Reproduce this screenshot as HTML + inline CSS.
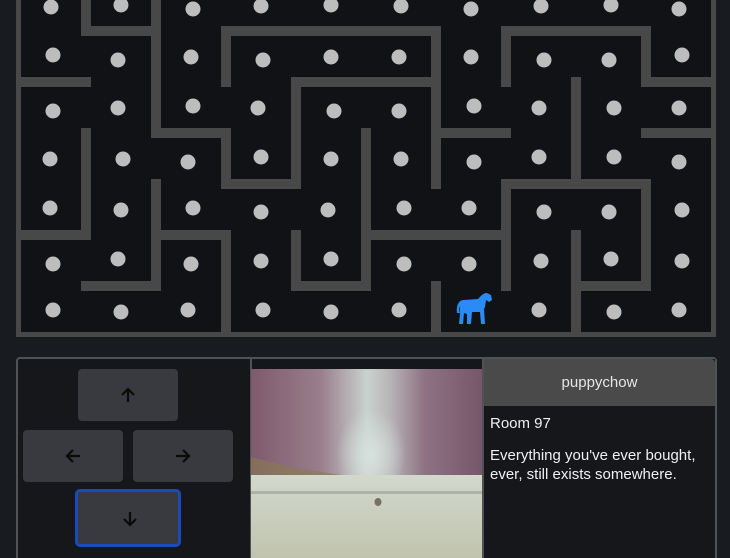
<!DOCTYPE html>
<html><head><meta charset="utf-8"><style>
html,body{margin:0;padding:0;background:#181b1f;width:730px;height:558px;overflow:hidden;font-family:"Liberation Sans",sans-serif;position:relative}
#maze{position:absolute;left:0;top:0}
.panel{position:absolute;left:16px;top:357px;width:698px;height:210px;border:2px solid #505256;border-radius:4px;background:#15171b;box-sizing:border-box;width:701px}
.btn{position:absolute;width:100px;height:52px;background:#383a3f;border-radius:4px}
.btn svg{position:absolute;left:41px;top:17px}
.info{position:absolute;left:484px;top:359px;width:231px;height:210px;background:#15171b}
.hdr{height:47px;background:#4a4a4a;color:#e6e6e6;font-family:"Liberation Sans",sans-serif;font-size:15px;text-align:center;line-height:48px;border-radius:0 4px 0 0}
.body{color:#f0f0f0;font-family:"Liberation Sans",sans-serif;font-size:15px;padding:8px 6px;line-height:19px}
</style></head><body>
<svg id="maze" width="730" height="340" viewBox="0 0 730 340">
<defs><clipPath id="c"><rect x="16" y="0" width="700" height="337"/></clipPath></defs>
<rect x="16" y="0" width="700" height="337" fill="#111216"/>
<g stroke="#484848" stroke-width="10" stroke-linecap="square" fill="none" clip-path="url(#c)">
<line x1="86" y1="-20" x2="86" y2="31"/><line x1="86" y1="133" x2="86" y2="235"/>
<line x1="156" y1="-20" x2="156" y2="133"/><line x1="156" y1="184" x2="156" y2="286"/>
<line x1="226" y1="31" x2="226" y2="82"/><line x1="226" y1="133" x2="226" y2="184"/><line x1="226" y1="235" x2="226" y2="337"/>
<line x1="296" y1="82" x2="296" y2="184"/><line x1="296" y1="235" x2="296" y2="286"/>
<line x1="366" y1="133" x2="366" y2="286"/>
<line x1="436" y1="31" x2="436" y2="184"/><line x1="436" y1="286" x2="436" y2="337"/>
<line x1="506" y1="31" x2="506" y2="82"/><line x1="506" y1="184" x2="506" y2="286"/>
<line x1="576" y1="82" x2="576" y2="184"/><line x1="576" y1="235" x2="576" y2="337"/>
<line x1="646" y1="31" x2="646" y2="82"/><line x1="646" y1="184" x2="646" y2="286"/>
<line x1="86" y1="31" x2="156" y2="31"/><line x1="226" y1="31" x2="436" y2="31"/><line x1="506" y1="31" x2="646" y2="31"/>
<line x1="16" y1="82" x2="86" y2="82"/><line x1="296" y1="82" x2="436" y2="82"/><line x1="646" y1="82" x2="716" y2="82"/>
<line x1="156" y1="133" x2="226" y2="133"/><line x1="436" y1="133" x2="506" y2="133"/><line x1="646" y1="133" x2="716" y2="133"/>
<line x1="226" y1="184" x2="296" y2="184"/><line x1="506" y1="184" x2="646" y2="184"/>
<line x1="16" y1="235" x2="86" y2="235"/><line x1="156" y1="235" x2="226" y2="235"/><line x1="366" y1="235" x2="506" y2="235"/>
<line x1="86" y1="286" x2="156" y2="286"/><line x1="296" y1="286" x2="366" y2="286"/><line x1="576" y1="286" x2="646" y2="286"/>
</g>
<rect x="16" y="0" width="5" height="337" fill="#484848"/>
<rect x="711" y="0" width="5" height="337" fill="#484848"/>
<rect x="16" y="332" width="700" height="5" fill="#484848"/>
<g fill="#bdbdbd">
<circle cx="51" cy="7" r="7.5"/><circle cx="121" cy="5" r="7.5"/><circle cx="193" cy="9" r="7.5"/><circle cx="261" cy="6" r="7.5"/><circle cx="331" cy="5" r="7.5"/><circle cx="401" cy="6" r="7.5"/><circle cx="471" cy="9" r="7.5"/><circle cx="541" cy="6" r="7.5"/><circle cx="611" cy="5" r="7.5"/><circle cx="679" cy="9" r="7.5"/>
<circle cx="53" cy="55" r="7.5"/><circle cx="118" cy="60" r="7.5"/><circle cx="191" cy="57" r="7.5"/><circle cx="263" cy="60" r="7.5"/><circle cx="331" cy="57" r="7.5"/><circle cx="399" cy="57" r="7.5"/><circle cx="471" cy="57" r="7.5"/><circle cx="544" cy="60" r="7.5"/><circle cx="609" cy="60" r="7.5"/><circle cx="682" cy="55" r="7.5"/>
<circle cx="53" cy="111" r="7.5"/><circle cx="118" cy="108" r="7.5"/><circle cx="193" cy="106" r="7.5"/><circle cx="258" cy="108" r="7.5"/><circle cx="334" cy="111" r="7.5"/><circle cx="399" cy="111" r="7.5"/><circle cx="474" cy="106" r="7.5"/><circle cx="539" cy="108" r="7.5"/><circle cx="614" cy="108" r="7.5"/><circle cx="679" cy="108" r="7.5"/>
<circle cx="50" cy="159" r="7.5"/><circle cx="123" cy="159" r="7.5"/><circle cx="188" cy="162" r="7.5"/><circle cx="261" cy="157" r="7.5"/><circle cx="331" cy="159" r="7.5"/><circle cx="401" cy="159" r="7.5"/><circle cx="474" cy="162" r="7.5"/><circle cx="539" cy="157" r="7.5"/><circle cx="614" cy="157" r="7.5"/><circle cx="679" cy="162" r="7.5"/>
<circle cx="50" cy="208" r="7.5"/><circle cx="121" cy="210" r="7.5"/><circle cx="193" cy="208" r="7.5"/><circle cx="261" cy="212" r="7.5"/><circle cx="328" cy="210" r="7.5"/><circle cx="404" cy="208" r="7.5"/><circle cx="469" cy="208" r="7.5"/><circle cx="544" cy="212" r="7.5"/><circle cx="609" cy="212" r="7.5"/><circle cx="682" cy="210" r="7.5"/>
<circle cx="53" cy="264" r="7.5"/><circle cx="118" cy="259" r="7.5"/><circle cx="191" cy="264" r="7.5"/><circle cx="261" cy="261" r="7.5"/><circle cx="331" cy="259" r="7.5"/><circle cx="404" cy="264" r="7.5"/><circle cx="469" cy="264" r="7.5"/><circle cx="541" cy="261" r="7.5"/><circle cx="611" cy="259" r="7.5"/><circle cx="682" cy="261" r="7.5"/>
<circle cx="53" cy="310" r="7.5"/><circle cx="121" cy="312" r="7.5"/><circle cx="188" cy="310" r="7.5"/><circle cx="263" cy="310" r="7.5"/><circle cx="331" cy="312" r="7.5"/><circle cx="399" cy="310" r="7.5"/><circle cx="539" cy="310" r="7.5"/><circle cx="614" cy="312" r="7.5"/><circle cx="679" cy="310" r="7.5"/>
</g>
<path fill="#2a8af6" d="M457 313 C456 305 459 300 464 300 L478 299 C481 296 483 293 487 293 L491 295 L492 300 L489 302 L486 300 L485 307 L484 309 L485 324 L481 324 L480 312 L472 312 L471 324 L467 324 L467 314 L464 313 L463 324 L459 324 L460 314 L460 306 C459 308 459 311 460 313 Z"/>
</svg>
<div class="panel"></div>
<div style="position:absolute;left:250px;top:358px;width:2px;height:200px;background:#505256"></div>
<div class="btn" style="left:78px;top:369px"><svg width="18" height="18" viewBox="0 0 18 18"><path d="M9 16V3M3 9l6-6 6 6" stroke="#0a0a0a" stroke-width="2.2" fill="none"/></svg></div>
<div class="btn" style="left:23px;top:430px"><svg width="18" height="18" viewBox="0 0 18 18"><path d="M16 9H3M9 3L3 9l6 6" stroke="#0a0a0a" stroke-width="2.2" fill="none"/></svg></div>
<div class="btn" style="left:133px;top:430px"><svg width="18" height="18" viewBox="0 0 18 18"><path d="M2 9h13M9 3l6 6-6 6" stroke="#0a0a0a" stroke-width="2.2" fill="none"/></svg></div>
<div class="btn" style="left:75px;top:489px;width:100px;height:52px;border:3px solid #1a4cb8;border-radius:5px"><svg width="18" height="18" viewBox="0 0 18 18" style="left:43px;top:18px"><path d="M9 2v13M3 9l6 6 6-6" stroke="#0a0a0a" stroke-width="2.2" fill="none"/></svg></div>
<svg style="position:absolute;left:251px;top:369px" width="232" height="189" viewBox="0 0 232 189">
<defs>
<linearGradient id="trees" x1="0" y1="0" x2="1" y2="0"><stop offset="0" stop-color="#7e5a6c"/><stop offset="0.3" stop-color="#9a7e8c"/><stop offset="0.5" stop-color="#c9d2ce"/><stop offset="0.6" stop-color="#b8b4b6"/><stop offset="0.75" stop-color="#8e7282"/><stop offset="1" stop-color="#76566a"/></linearGradient>
<linearGradient id="road" x1="0" y1="0" x2="0" y2="1"><stop offset="0" stop-color="#d2d8cc"/><stop offset="1" stop-color="#c0c4ae"/></linearGradient>
<radialGradient id="haze" cx="0.5" cy="0.5" r="0.5"><stop offset="0" stop-color="#d6e2de"/><stop offset="1" stop-color="#d6e2de" stop-opacity="0"/></radialGradient>
</defs>
<rect width="232" height="189" fill="url(#trees)"/>
<ellipse cx="120" cy="85" rx="35" ry="45" fill="url(#haze)"/>
<path d="M0 88L40 98L90 106L0 108Z" fill="#8a7a50" opacity="0.6"/>
<rect y="106" width="232" height="83" fill="url(#road)"/>
<rect y="122" width="232" height="3" fill="#8e9288" opacity="0.5"/>
<ellipse cx="127" cy="133" rx="3.5" ry="4" fill="#777064"/>
</svg>
<div style="position:absolute;left:482px;top:358px;width:2px;height:200px;background:#505256"></div>
<div class="info"><div class="hdr">puppychow</div><div class="body"><div style="margin-bottom:13px">Room 97</div>Everything you've ever bought, ever, still exists somewhere.</div></div>
</body></html>
